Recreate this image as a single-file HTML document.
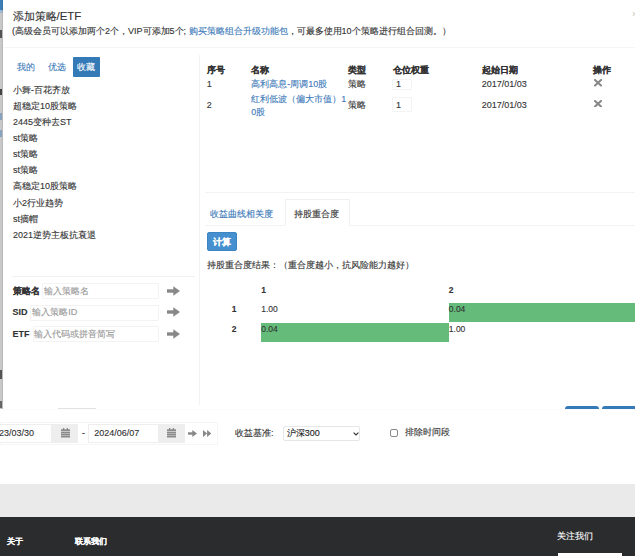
<!DOCTYPE html>
<html><head><meta charset="utf-8">
<style>
*{box-sizing:border-box;margin:0;padding:0}
html,body{width:635px;height:556px;overflow:hidden;background:#fff;font-family:"Liberation Sans",sans-serif;color:#333;position:relative}
.a{position:absolute;white-space:nowrap;line-height:1;-webkit-text-stroke:0.12px currentColor}
.page{position:absolute;left:0;top:0;width:635px;height:556px}
.strip{position:absolute;left:0;top:0;width:3px;height:409px;background:#c9c9c9}
.modal{position:absolute;left:3px;top:0;width:700px;height:409px;background:#fff;overflow:hidden;box-shadow:-1px 0 1px rgba(0,0,0,.08)}
.hdr-line{position:absolute;left:0;top:47px;width:700px;height:1px;background:#f5f5f5}
.vline{position:absolute;left:196px;top:55px;width:1px;height:350px;background:#f2f2f2}
.t9{font-size:9px}
.modal .t9{margin-top:0.7px}
.link{color:#3c7ab9}
.b{font-weight:bold}
.pill{position:absolute;left:69.5px;top:57.3px;width:27.6px;height:19.6px;background:#337ab7;border-radius:1px}
.inp{position:absolute;border:1px solid #f3f3f3;border-radius:1px}
.green{position:absolute;background:#64bb7a}
.footer{position:absolute;left:0;top:516.5px;width:635px;height:40px;background:#2b2c2e}
.gray{position:absolute;left:0;top:483.5px;width:635px;height:33px;background:#eaeaea}
</style></head><body>
<div class="page">
  <div class="strip"></div>
  <div style="position:absolute;left:0;top:0;width:3px;height:10px;background:#3d7fb9"></div>
  <div style="position:absolute;left:0;top:10px;width:3px;height:3px;background:#9fb9cf"></div>
  <div style="position:absolute;left:0;top:30px;width:2px;height:8px;background:#555"></div>
  <div style="position:absolute;left:0;top:89px;width:2px;height:6px;background:#444"></div>
  <div style="position:absolute;left:0;top:113px;width:2px;height:7px;background:#8aa4c0"></div>
  <div style="position:absolute;left:0;top:130px;width:2px;height:7px;background:#8aa4c0"></div>
  <div style="position:absolute;left:0;top:370px;width:2px;height:9px;background:#555"></div>
  <div style="position:absolute;left:0;top:401px;width:2px;height:7px;background:#666"></div>
  <div class="modal">
    <div class="a" style="left:9.6px;top:10.7px;font-size:11.4px">添加策略/ETF</div>
    <div class="a" style="left:9px;top:26.5px;font-size:9px">(高级会员可以添加两个2个，VIP可添加5个; <span class="link">购买策略组合升级功能包</span>，可最多使用10个策略进行组合回测。）</div>
    <div class="a" style="left:629px;top:10px;font-size:9px;color:#ccc">×</div>
    <div class="hdr-line"></div>
    <div class="vline"></div>
    <!-- left tabs -->
    <div class="a t9 link" style="left:14.3px;top:62.8px">我的</div>
    <div class="a t9 link" style="left:44.7px;top:62.8px">优选</div>
    <div class="pill"></div>
    <div class="a t9" style="left:74px;top:62.8px;color:#fff">收藏</div>
    <!-- list -->
    <div class="a t9" style="left:10px;top:85px">小舞-百花齐放</div>
    <div class="a t9" style="left:10px;top:101.1px">超稳定10股策略</div>
    <div class="a t9" style="left:10px;top:117.2px">2445变种去ST</div>
    <div class="a t9" style="left:10px;top:133.4px">st策略</div>
    <div class="a t9" style="left:10px;top:149.5px">st策略</div>
    <div class="a t9" style="left:10px;top:165.6px">st策略</div>
    <div class="a t9" style="left:10px;top:181.8px">高稳定10股策略</div>
    <div class="a t9" style="left:10px;top:197.9px">小2行业趋势</div>
    <div class="a t9" style="left:10px;top:214px">st摘帽</div>
    <div class="a t9" style="left:10px;top:230.1px">2021逆势主板抗衰退</div>
    <!-- form -->
    <div style="position:absolute;left:9px;top:276px;width:183px;height:1px;background:#f0f0f0"></div>
    <div class="inp" style="left:38.7px;top:283.2px;width:117.3px;height:16px"></div>
    <div class="inp" style="left:27px;top:304.6px;width:129px;height:16px"></div>
    <div class="inp" style="left:30px;top:326px;width:126px;height:16px"></div>
    <div class="a t9 b" style="left:9.6px;top:286.8px">策略名</div>
    <div class="a t9" style="left:41px;top:286.8px;color:#999">输入策略名</div>
    <div class="a t9 b" style="left:9.6px;top:307.7px">SID</div>
    <div class="a t9" style="left:29.3px;top:307.7px;color:#999">输入策略ID</div>
    <div class="a t9 b" style="left:9.6px;top:329.3px">ETF</div>
    <div class="a t9" style="left:31.3px;top:329.3px;color:#999">输入代码或拼音简写</div>
    <svg style="position:absolute;left:164.3px;top:286.2px" width="13" height="10" viewBox="0 0 13 10"><rect x="0" y="3.3" width="7.5" height="3.4" fill="#888"/><path d="M6.3 0.2 L13 5 L6.3 9.8 Z" fill="#888"/></svg>
    <svg style="position:absolute;left:164.3px;top:306.9px" width="13" height="10" viewBox="0 0 13 10"><rect x="0" y="3.3" width="7.5" height="3.4" fill="#888"/><path d="M6.3 0.2 L13 5 L6.3 9.8 Z" fill="#888"/></svg>
    <svg style="position:absolute;left:164.3px;top:328.9px" width="13" height="10" viewBox="0 0 13 10"><rect x="0" y="3.3" width="7.5" height="3.4" fill="#888"/><path d="M6.3 0.2 L13 5 L6.3 9.8 Z" fill="#888"/></svg>
    <!-- table -->
    <div class="a t9 b" style="left:203.7px;top:65.5px">序号</div>
    <div class="a t9 b" style="left:248.2px;top:65.5px">名称</div>
    <div class="a t9 b" style="left:345.2px;top:65.5px">类型</div>
    <div class="a t9 b" style="left:389.8px;top:65.5px">仓位权重</div>
    <div class="a t9 b" style="left:478.7px;top:65.5px">起始日期</div>
    <div class="a t9 b" style="left:590.4px;top:65.5px">操作</div>
    <div class="a t9" style="left:203.7px;top:79px">1</div>
    <div class="a t9 link" style="left:248.2px;top:79px">高利高息-周调10股</div>
    <div class="a t9" style="left:345.2px;top:79px">策略</div>
    <div class="inp" style="left:389px;top:78.6px;width:19.7px;height:11.8px"></div>
    <div class="a t9" style="left:393px;top:79px">1</div>
    <div class="a t9" style="left:478.7px;top:79px">2017/01/03</div>
    <svg style="position:absolute;left:590.5px;top:79.4px" width="8" height="7.5" viewBox="0 0 8 7.5"><path d="M1 1 L7 6.5 M7 1 L1 6.5" stroke="#888" stroke-width="2.1" stroke-linecap="round"/></svg>
    <div class="a t9" style="left:203.7px;top:100px">2</div>
    <div class="a t9 link" style="left:248.2px;top:92px;line-height:13.5px">红利低波（偏大市值）1<br>0股</div>
    <div class="a t9" style="left:345.2px;top:100px">策略</div>
    <div class="inp" style="left:389px;top:96.7px;width:19.7px;height:15.8px"></div>
    <div class="a t9" style="left:393px;top:100px">1</div>
    <div class="a t9" style="left:478.7px;top:100.3px">2017/01/03</div>
    <svg style="position:absolute;left:590.5px;top:99.5px" width="8" height="7.5" viewBox="0 0 8 7.5"><path d="M1 1 L7 6.5 M7 1 L1 6.5" stroke="#888" stroke-width="2.1" stroke-linecap="round"/></svg>
    <!-- tabs right -->
    <div style="position:absolute;left:202px;top:192px;width:500px;height:1px;background:#f3f3f3"></div>
    <div style="position:absolute;left:202px;top:225px;width:500px;height:1px;background:#f2f2f2"></div>
    <div style="position:absolute;left:281.7px;top:199.3px;width:65.1px;height:26.7px;background:#fff;border:1px solid #f0f0f0;border-bottom-color:#fff"></div>
    <div class="a t9 link" style="left:206.7px;top:209px">收益曲线相关度</div>
    <div class="a t9" style="left:291px;top:209px">持股重合度</div>
    <div style="position:absolute;left:203.9px;top:232.3px;width:30.2px;height:18.9px;background:#4690cf;border:1px solid #3d84c2;border-radius:2px"></div>
    <div class="a t9 b" style="left:210px;top:237.3px;color:#fff">计算</div>
    <div class="a t9" style="left:203.9px;top:260px">持股重合度结果：（重合度越小，抗风险能力越好）</div>
    <!-- matrix -->
    <div class="a b" style="left:258.2px;top:285.5px;font-size:8.5px">1</div>
    <div class="a b" style="left:445.8px;top:285.5px;font-size:8.5px">2</div>
    <div class="a b" style="left:228.7px;top:305px;font-size:8.5px">1</div>
    <div class="a b" style="left:228.7px;top:324.5px;font-size:8.5px">2</div>
    <div class="green" style="left:445.8px;top:302.8px;width:260px;height:19px"></div>
    <div class="green" style="left:257.6px;top:322.6px;width:188.2px;height:19.2px"></div>
    <div class="a" style="left:258.2px;top:305px;font-size:8.5px">1.00</div>
    <div class="a" style="left:445.8px;top:305px;font-size:8.5px">0.04</div>
    <div class="a" style="left:258.2px;top:324.5px;font-size:8.5px">0.04</div>
    <div class="a" style="left:445.8px;top:324.5px;font-size:8.5px">1.00</div>
    <!-- clipped buttons -->
    <div style="position:absolute;left:562px;top:406px;width:34px;height:20px;background:#337ab7;border-radius:3px"></div>
    <div style="position:absolute;left:599px;top:406px;width:60px;height:20px;background:#337ab7;border-radius:3px"></div>
    <div style="position:absolute;left:55px;top:408px;width:38px;height:1px;background:#e2e2e2"></div>
  </div>
  <!-- page below -->
  <div style="position:absolute;left:0;top:421.5px;width:218px;height:23px;border:1px solid #f6f6f6"></div>
  <div style="position:absolute;left:-20px;top:423.7px;width:72px;height:19px;border:1px solid #eee;background:#fff"></div>
  <div class="a" style="left:-1px;top:428.5px;font-size:9px">23/03/30</div>
  <div style="position:absolute;left:52px;top:423.7px;width:26px;height:19px;background:#eee"></div><svg style="position:absolute;left:60.5px;top:428.3px" width="9" height="9.5" viewBox="0 0 9 9.5"><rect x="0" y="1.3" width="9" height="8.2" fill="#8a8a8a"/><rect x="2" y="0" width="1.3" height="2" fill="#8a8a8a"/><rect x="5.7" y="0" width="1.3" height="2" fill="#8a8a8a"/><rect x="0" y="3.2" width="9" height="0.7" fill="#e4e4e4"/><rect x="0" y="5.2" width="9" height="0.6" fill="#d0d0d0"/><rect x="0" y="7.2" width="9" height="0.6" fill="#d0d0d0"/></svg>
  <div class="a" style="left:82px;top:428.5px;font-size:9px">-</div>
  <div style="position:absolute;left:88.2px;top:423.7px;width:71.2px;height:19px;border:1px solid #eee;background:#fff"></div>
  <div class="a" style="left:94.3px;top:428.5px;font-size:9px">2024/06/07</div>
  <div style="position:absolute;left:159.4px;top:423.7px;width:25.3px;height:19px;background:#eee"></div><svg style="position:absolute;left:167px;top:428.3px" width="9" height="9.5" viewBox="0 0 9 9.5"><rect x="0" y="1.3" width="9" height="8.2" fill="#8a8a8a"/><rect x="2" y="0" width="1.3" height="2" fill="#8a8a8a"/><rect x="5.7" y="0" width="1.3" height="2" fill="#8a8a8a"/><rect x="0" y="3.2" width="9" height="0.7" fill="#e4e4e4"/><rect x="0" y="5.2" width="9" height="0.6" fill="#d0d0d0"/><rect x="0" y="7.2" width="9" height="0.6" fill="#d0d0d0"/></svg>
  <svg style="position:absolute;left:187.6px;top:429.8px" width="9" height="7" viewBox="0 0 9 7"><rect x="0" y="2.3" width="5" height="2.4" fill="#888"/><path d="M4.3 0 L9 3.5 L4.3 7 Z" fill="#888"/></svg>
  <svg style="position:absolute;left:202.7px;top:429.5px" width="8.2" height="7" viewBox="0 0 8.2 7"><path d="M0 0 L4.1 3.5 L0 7 Z M4.1 0 L8.2 3.5 L4.1 7 Z" fill="#888"/></svg>
  <div class="a" style="left:234.9px;top:429px;font-size:9px">收益基准:</div>
  <div style="position:absolute;left:283.4px;top:425.7px;width:76.6px;height:15.4px;border:1px solid #e6e6e6;border-radius:2px;background:#fff"></div>
  <div class="a" style="left:286.7px;top:429px;font-size:9px;color:#222">沪深300</div><svg style="position:absolute;left:352.8px;top:431.5px" width="6" height="4" viewBox="0 0 6 4"><path d="M0.6 0.6 L3 3 L5.4 0.6" stroke="#333" stroke-width="1.1" fill="none"/></svg>
  <div style="position:absolute;left:389.6px;top:429.3px;width:8.5px;height:7.8px;border:1px solid #8a8a8a;border-radius:2px"></div>
  <div class="a" style="left:404.8px;top:428.1px;font-size:9px">排除时间段</div>
  <div class="gray"></div>
  <div class="footer"></div>
  <div class="a b" style="left:6.6px;top:537.5px;font-size:8px;color:#fff">关于</div>
  <div class="a b" style="left:74.7px;top:537.5px;font-size:8px;color:#fff">联系我们</div>
  <div class="a" style="left:557px;top:531.8px;font-size:9px;color:#fff">关注我们</div>
  <div style="position:absolute;left:557.5px;top:552.5px;width:64.3px;height:10px;background:#fff"></div>
</div>
</body></html>
